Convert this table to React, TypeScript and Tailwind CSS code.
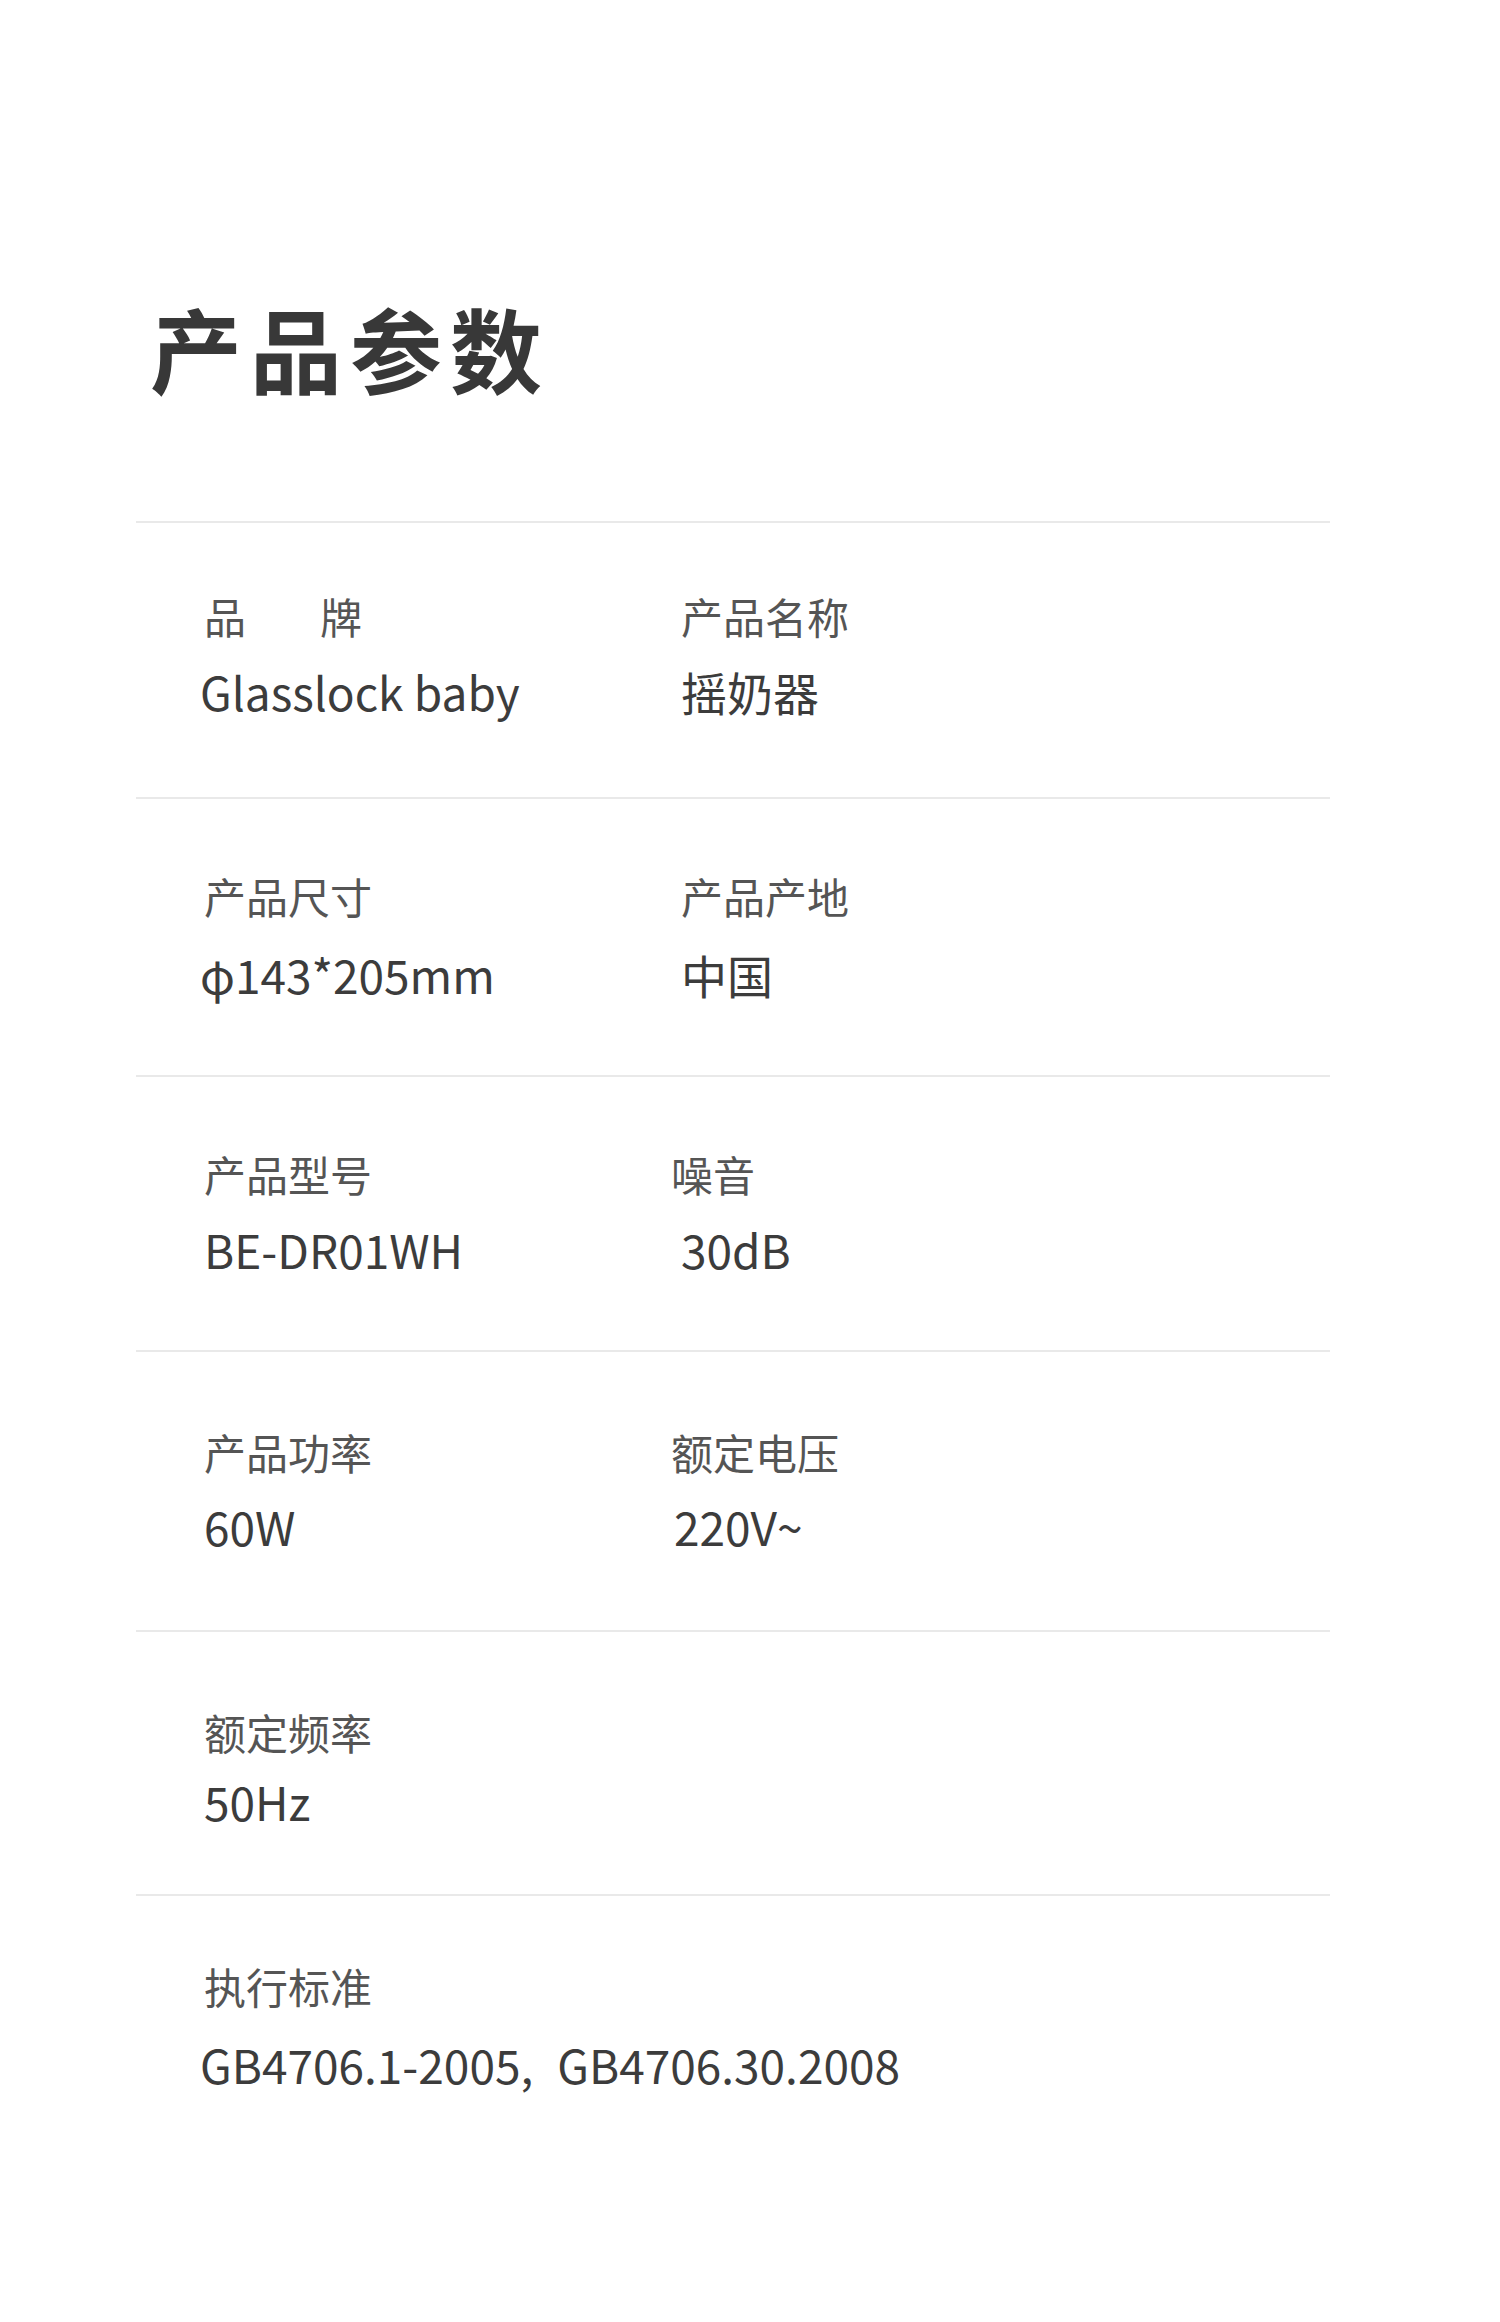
import React from "react";

const font = { fontFamily: '"Noto Sans CJK SC", "Noto Sans", sans-serif' };

type Cell = { label: React.ReactNode; value: React.ReactNode; lx?: string; vx?: string };

function Item({ c, mt, span }: { c: Cell; mt: string; span?: boolean }) {
  return (
    <div className={`flex flex-col ${span ? "col-span-2" : ""}`}>
      <div className={`text-[42px] leading-none text-[#555555] ${c.lx ?? ""}`}>{c.label}</div>
      <div className={`${mt} whitespace-nowrap text-[46px] leading-none text-[#3c3c3c] ${c.vx ?? ""}`}>{c.value}</div>
    </div>
  );
}

function Row({ left, right, h, pt, mt }: { left: Cell; right?: Cell; h: string; pt: string; mt: string }) {
  return (
    <div className={`border-t-2 border-[#e9e9e9] ${h} ${pt}`}>
      <div className="grid grid-cols-[477px_1fr] pl-[68px]">
        <Item c={left} mt={mt} span={!right} />
        {right ? <Item c={right} mt={mt} /> : null}
      </div>
    </div>
  );
}

export default function App() {
  return (
    <div className="min-h-[2322px] w-[1500px] bg-white" style={font}>
      <div className="pl-[136px] w-[1330px]">
        <div className="pt-[301px] pl-[14px] h-[521px]">
          <h1 className="text-[92px] leading-none font-bold tracking-[8px] text-[#383838]">产品参数</h1>
        </div>
        <Row
          h="h-[276px]"
          pt="pt-[72px]"
          mt="mt-[31px]"
          left={{ label: <span>品<span className="inline-block w-[74px]" />牌</span>, value: "Glasslock baby", vx: "-ml-[4px]" }}
          right={{ label: "产品名称", value: "摇奶器" }}
        />
        <Row
          h="h-[278px]"
          pt="pt-[76px]"
          mt="mt-[34px]"
          left={{ label: "产品尺寸", value: "φ143*205mm", vx: "-ml-[4px]" }}
          right={{ label: "产品产地", value: "中国" }}
        />
        <Row
          h="h-[275px]"
          pt="pt-[76px]"
          mt="mt-[31px]"
          left={{ label: "产品型号", value: "BE-DR01WH" }}
          right={{ label: "噪音", value: "30dB", lx: "-ml-[10px]" }}
        />
        <Row
          h="h-[280px]"
          pt="pt-[79px]"
          mt="mt-[30px]"
          left={{ label: "产品功率", value: "60W" }}
          right={{ label: "额定电压", value: "220V~", lx: "-ml-[10px]", vx: "-ml-[7px]" }}
        />
        <Row
          h="h-[264px]"
          pt="pt-[79px]"
          mt="mt-[25px]"
          left={{ label: "额定频率", value: "50Hz" }}
        />
        <Row
          h="h-[300px]"
          pt="pt-[69px]"
          mt="mt-[34px]"
          left={{
            label: "执行标准",
            value: (
              <span>
                GB4706.1-2005,<span className="inline-block w-[24px]" />GB4706.30.2008
              </span>
            ),
            vx: "-ml-[4px]",
          }}
        />
      </div>
    </div>
  );
}
